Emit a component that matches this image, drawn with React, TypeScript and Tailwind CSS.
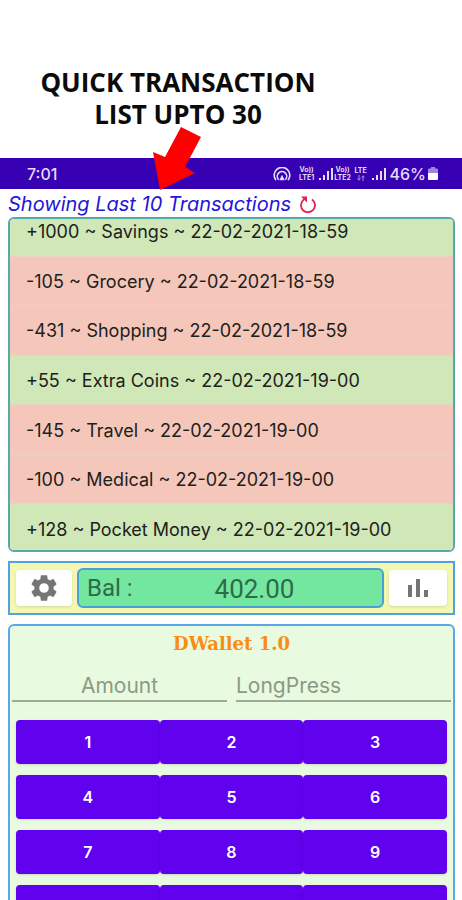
import { clsx } from "clsx";

type Transaction = {
  amount: number;
  label: string;
  time: string;
};

const TRANSACTIONS: Transaction[] = [
  { amount: 1000, label: "Savings", time: "22-02-2021-18-59" },
  { amount: -105, label: "Grocery", time: "22-02-2021-18-59" },
  { amount: -431, label: "Shopping", time: "22-02-2021-18-59" },
  { amount: 55, label: "Extra Coins", time: "22-02-2021-19-00" },
  { amount: -145, label: "Travel", time: "22-02-2021-19-00" },
  { amount: -100, label: "Medical", time: "22-02-2021-19-00" },
  { amount: 128, label: "Pocket Money", time: "22-02-2021-19-00" },
];

const KEYS = ["1", "2", "3", "4", "5", "6", "7", "8", "9"];
const EXTRA_KEYS = ["Decimal point", "Zero", "Clear"];

const KEY_CLASS =
  "h-11 rounded-sm bg-[#6002ee] text-base font-semibold text-white shadow-sm";

function Signal() {
  return (
    <svg viewBox="0 0 14 12" className="h-3 w-3.5" fill="#e4dcf8">
      <rect x="0" y="10" width="2" height="2" />
      <rect x="4" y="7" width="2" height="5" />
      <rect x="8" y="3" width="2" height="9" />
      <rect x="12" y="0" width="2" height="12" />
    </svg>
  );
}

function Volte({ line }: { line: string }) {
  return (
    <span className="flex w-[18px] flex-col items-center text-[7px] leading-[8px] font-bold">
      <span>Vo))</span>
      <span>{line}</span>
    </span>
  );
}

function StatusBar() {
  return (
    <div className="flex h-[31px] items-center justify-between bg-[#3700b3] pr-6 pl-[27px] text-[#e4dcf8]">
      <span className="text-base font-medium">7:01</span>
      <div className="flex items-center">
        <svg
          viewBox="0 0 18 14"
          className="mr-[7px] h-3.5 w-[18px]"
          fill="none"
          stroke="#e4dcf8"
          strokeWidth="1.6"
          strokeLinecap="round"
        >
          <path d="M2.600 12.600a7.800 7.800 0 1 1 12.800 0" />
          <path d="M5.300 12.200a4.700 4.700 0 1 1 7.400 0" />
          <path d="M7.500 12.500 9 9.500l1.500 3z" fill="#e4dcf8" />
        </svg>
        <Volte line="LTE1" />
        <span className="mr-px ml-[3px]">
          <Signal />
        </span>
        <Volte line="LTE2" />
        <span className="mr-1 ml-0.5 flex w-3.5 flex-col items-center text-[7px] leading-[8px] font-bold">
          <span>LTE</span>
          <svg viewBox="0 0 8 6" className="h-1.5 w-2" fill="none" stroke="#a58fe0">
            <path d="M2 0v5M.5 3.500 2 5.200l1.500-1.700M6 6V1M4.500 2.500 6 .8l1.500 1.700" />
          </svg>
        </span>
        <Signal />
        <span className="ml-1 text-base font-medium">46%</span>
        <svg viewBox="0 0 10 13" className="ml-0.5 h-[13px] w-2.5">
          <path d="M3 0h4v1.500h2a1 1 0 0 1 1 1V6H0V2.500a1 1 0 0 1 1-1h2z" fill="#9d86dc" />
          <path d="M0 6h10v6a1 1 0 0 1-1 1H1a1 1 0 0 1-1-1z" fill="#fff" />
        </svg>
      </div>
    </div>
  );
}

function TransactionList() {
  return (
    <div className="mr-[7px] ml-2 h-[335px] overflow-hidden rounded-md border-2 border-[#58aaa9]">
      <ul className="-mt-3 flex h-[347px] flex-col">
        {TRANSACTIONS.map((t) => (
          <li
            key={t.label}
            className={clsx(
              "flex flex-1 items-center border-b border-[#ecd2c4] pt-0.5 pl-4 text-lg whitespace-nowrap text-[#1d211b]",
              t.amount > 0 ? "bg-[#d0e8b8]" : "bg-[#f5c6ba]"
            )}
          >
            {t.amount > 0 ? "+" : ""}
            {t.amount} ~ {t.label} ~ {t.time}
          </li>
        ))}
      </ul>
    </div>
  );
}

function BalanceBar() {
  return (
    <div className="mt-[9px] mr-[7px] ml-2 flex h-[54px] items-center gap-[5px] border-2 border-[#4fa3e3] bg-[#f3f7b2] px-1.5">
      <button
        aria-label="Settings"
        className="flex h-9 w-14 items-center justify-center rounded-sm bg-white shadow"
      >
        <svg viewBox="0 0 24 24" className="h-8 w-8" fill="#757575">
          <path d="M19.140 12.940c.04-.3.06-.61.06-.94s-.02-.64-.07-.94l2.030-1.580a.49.49 0 0 0 .12-.61l-1.920-3.320a.49.49 0 0 0-.59-.22l-2.390.96a7 7 0 0 0-1.620-.94l-.36-2.540a.48.48 0 0 0-.48-.41h-3.840a.48.48 0 0 0-.47.41l-.36 2.540c-.59.24-1.130.57-1.620.94l-2.390-.96a.48.48 0 0 0-.59.22L2.740 8.870a.48.48 0 0 0 .12.610l2.030 1.580c-.05.3-.09.63-.09.94s.02.64.07.94l-2.030 1.580a.49.49 0 0 0-.12.610l1.920 3.320c.12.22.37.29.59.22l2.390-.96c.5.38 1.030.7 1.620.94l.36 2.540c.05.24.24.41.48.41h3.840c.24 0 .44-.17.47-.41l.36-2.540a7 7 0 0 0 1.620-.94l2.390.96c.22.08.47 0 .59-.22l1.920-3.320a.48.48 0 0 0-.12-.61zM12 15.600a3.600 3.600 0 1 1 0-7.200 3.600 3.600 0 0 1 0 7.200z" />
        </svg>
      </button>
      <div className="flex h-10 flex-1 items-center rounded-md border-2 border-[#4a9fd8] bg-[#73e6a0] pl-2 font-[Roboto,sans-serif] text-[#2f6b48]">
        <span className="w-[50px] text-2xl">Bal :</span>
        <output className="flex-1 pt-0.5 pr-2.5 text-center text-[26px]">402.00</output>
      </div>
      <button
        aria-label="Statistics"
        className="flex h-9 w-[58px] items-center justify-center rounded-sm bg-white shadow"
      >
        <svg viewBox="0 0 20 18" className="h-[18px] w-5" fill="#757575">
          <rect x="0" y="6" width="4" height="12" />
          <rect x="8" y="0" width="4" height="18" />
          <rect x="16" y="11" width="4" height="7" />
        </svg>
      </button>
    </div>
  );
}

function Keypad() {
  return (
    <div className="mt-[9px] mr-[7px] ml-2 rounded-md border-2 border-[#5aa9e6] bg-[#e8fadf]">
      <h2 className="mt-1 text-center font-['DejaVu_Serif',serif] text-lg leading-7 font-bold text-[#fb8c12]">
        DWallet 1.0
      </h2>
      <div className="mt-3.5 flex gap-[9px] px-0.5 text-[21px]">
        <input
          aria-label="Amount"
          placeholder="Amount"
          className="h-[30px] w-0 flex-1 border-b-2 border-[#9cab94] bg-transparent text-center outline-none placeholder:text-[#8c9986]"
        />
        <input
          aria-label="Long press"
          placeholder="LongPress"
          className="h-[30px] w-0 flex-1 border-b-2 border-[#9cab94] bg-transparent outline-none placeholder:text-[#8c9986]"
        />
      </div>
      <div className="mt-[18px] grid grid-cols-3 gap-y-[11px] px-1.5 pb-4">
        {KEYS.map((key) => (
          <button key={key} className={KEY_CLASS}>
            {key}
          </button>
        ))}
        {EXTRA_KEYS.map((name) => (
          <button key={name} aria-label={name} className={KEY_CLASS} />
        ))}
      </div>
    </div>
  );
}

export default function App() {
  return (
    <main className="relative h-screen overflow-hidden bg-white font-[Inter,Roboto,sans-serif]">
      <h1 className="pt-[66px] pr-[106px] pb-7 text-center font-['Open_Sans',sans-serif] text-[26px] leading-8 font-bold text-[#0b0b0b]">
        QUICK TRANSACTION
        <br />
        LIST UPTO 30
      </h1>
      <svg
        viewBox="0 0 48 63"
        className="absolute top-[127px] left-[153px] h-[63px] w-12"
        fill="#fe0000"
      >
        <path d="M28 0 48 10 32 40 42 46 7 63 0 25 12 30z" />
      </svg>
      <StatusBar />
      <div className="flex h-7 items-center pt-0.5 pl-2">
        <p className="text-xl whitespace-nowrap text-[#1f16d8] italic">
          Showing Last 10 Transactions
        </p>
        <button aria-label="Refresh" className="ml-2">
          <svg
            viewBox="0 0 18 18"
            className="h-[18px] w-[18px]"
            fill="none"
            stroke="#e0234e"
            strokeWidth="1.8"
          >
            <path d="M13 4.500a7 7 0 1 1-9 .8L6.500 3" />
            <path d="M2 1.500h6v6z" fill="#e0234e" stroke="none" />
          </svg>
        </button>
      </div>
      <TransactionList />
      <BalanceBar />
      <Keypad />
    </main>
  );
}
